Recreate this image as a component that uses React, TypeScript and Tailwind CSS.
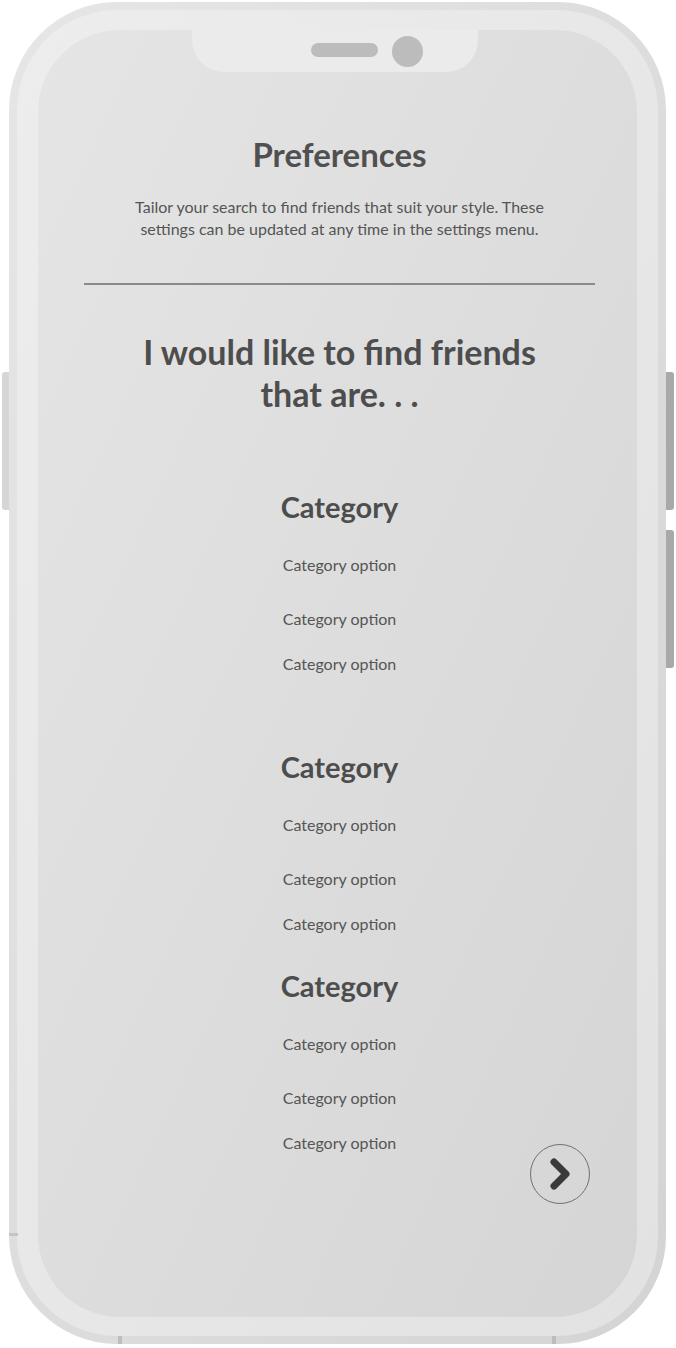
import React from "react";

function CategoryGroup({ className }: { className: string }) {
  return (
    <div className={`flex flex-col items-center ${className}`}>
      <h3 className="text-[29px] font-bold leading-[34px] text-[#4d4d4d]">Category</h3>
      <p className="mt-[32px] text-[16px] leading-[18px] text-[#555]">Category option</p>
      <p className="mt-[36px] text-[16px] leading-[18px] text-[#555]">Category option</p>
      <p className="mt-[27px] text-[16px] leading-[18px] text-[#555]">Category option</p>
    </div>
  );
}

export default function App() {
  return (
    <div
      className="relative h-[1348px] w-[676px] overflow-hidden bg-white"
      style={{ fontFamily: "Lato, 'Noto Sans', sans-serif" }}
    >
      {/* side buttons */}
      <div className="absolute left-[2px] top-[372px] h-[138px] w-[9px] rounded-l-[3px] bg-[#d6d6d6]" />
      <div className="absolute right-[2px] top-[372px] h-[138px] w-[9px] rounded-r-[3px] bg-[#a9a9a9]" />
      <div className="absolute right-[2px] top-[530px] h-[138px] w-[9px] rounded-r-[3px] bg-[#a9a9a9]" />

      {/* phone body */}
      <div className="relative ml-[9px] mt-[2px] h-[1342px] w-[657px] rounded-[108px] bg-gradient-to-br from-[#e6e6e6] to-[#d4d4d4] p-[8px]">
        {/* antenna marks */}
        <div className="absolute left-0 top-[1231px] h-[3px] w-[9px] bg-[#c4c4c4]" />
        <div className="absolute bottom-0 left-[109px] h-[8px] w-[4px] bg-[#bdbdbd]" />
        <div className="absolute bottom-0 left-[543px] h-[8px] w-[4px] bg-[#bdbdbd]" />

        <div className="h-full w-full rounded-[100px] bg-gradient-to-br from-[#ededed] to-[#e2e2e2] px-[21px] pt-[20px] pb-[19px]">
          {/* screen */}
          <div className="relative h-full w-full overflow-hidden rounded-[82px] bg-gradient-to-br from-[#e5e5e5] to-[#d5d5d5]">
            {/* notch */}
            <div className="absolute left-[154px] top-0 flex h-[42px] w-[286px] items-center justify-center gap-[14px] rounded-b-[32px] bg-[#ebebeb] pl-[64px]">
              <div className="mb-[2px] h-[14px] w-[67px] rounded-full bg-[#bcbcbc]" />
              <div className="h-[31px] w-[31px] rounded-full bg-[#bcbcbc]" />
            </div>

            <div className="flex flex-col items-center pl-[4px] pt-[104px]">
              <h1 className="text-[33px] font-bold leading-[40px] text-[#505050]">Preferences</h1>
              <p className="mt-[22px] w-[424px] text-center text-[16px] leading-[22px] text-[#555]">
                Tailor your search to find friends that suit your style. These settings can be
                updated at any time in the settings menu.
              </p>
              <div className="mt-[43px] h-[2px] w-[511px] bg-[#8a8a8a]" />

              <h2 className="mt-[46px] w-[420px] text-center text-[34px] font-bold leading-[42px] text-[#4d4d4d]">
                I would like to find friends that are. . .
              </h2>

              <CategoryGroup className="mt-[75px]" />
              <CategoryGroup className="mt-[77px]" />
              <CategoryGroup className="mt-[36px]" />
            </div>

            {/* next button */}
            <button className="absolute left-[492px] top-[1114px] flex h-[60px] w-[60px] items-center justify-center rounded-full border-[1.5px] border-[#707070]">
              <svg width="26" height="34" viewBox="0 0 26 34" fill="none">
                <path
                  d="M7 5 L19 17 L7 29"
                  stroke="#3a3a3a"
                  strokeWidth="7"
                  strokeLinecap="round"
                  strokeLinejoin="round"
                />
              </svg>
            </button>
          </div>
        </div>
      </div>
    </div>
  );
}
